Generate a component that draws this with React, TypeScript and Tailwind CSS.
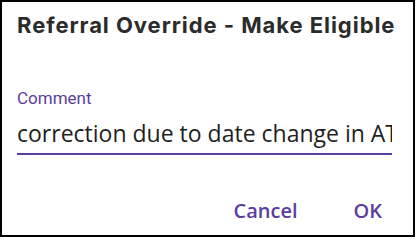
export default function App() {
  return (
    <div className="w-[416px] h-[237px] bg-white">
      <div className="w-[415px] h-[237px] border-2 border-black bg-white flex flex-col px-[15px]">
        <h2 className="mt-[9px] text-[22px] leading-[28px] font-bold tracking-[0.95px] text-[#2b2b2b] whitespace-nowrap font-['Inter',sans-serif]">
          Referral Override - Make Eligible
        </h2>

        <div className="mt-[49px] flex flex-col">
          <label className="text-[17px] leading-[20px] text-[#5a3d9e] font-['Roboto',sans-serif]">Comment</label>
          <div className="mt-[10px] w-[375px] overflow-hidden whitespace-nowrap text-[23px] leading-[30px] text-[#1f1f1f] font-['Open_Sans',sans-serif] border-b-2 border-[#5a3d9e] pb-[5px]">
            correction due to date change in ATS
          </div>
        </div>

        <div className="mt-auto mb-[10px] flex justify-end gap-[56px] pr-[16px] font-['Open_Sans',sans-serif] text-[20px] leading-[28px] font-semibold text-[#5a3d9e]">
          <button type="button">Cancel</button>
          <button type="button">OK</button>
        </div>
      </div>
    </div>
  );
}
